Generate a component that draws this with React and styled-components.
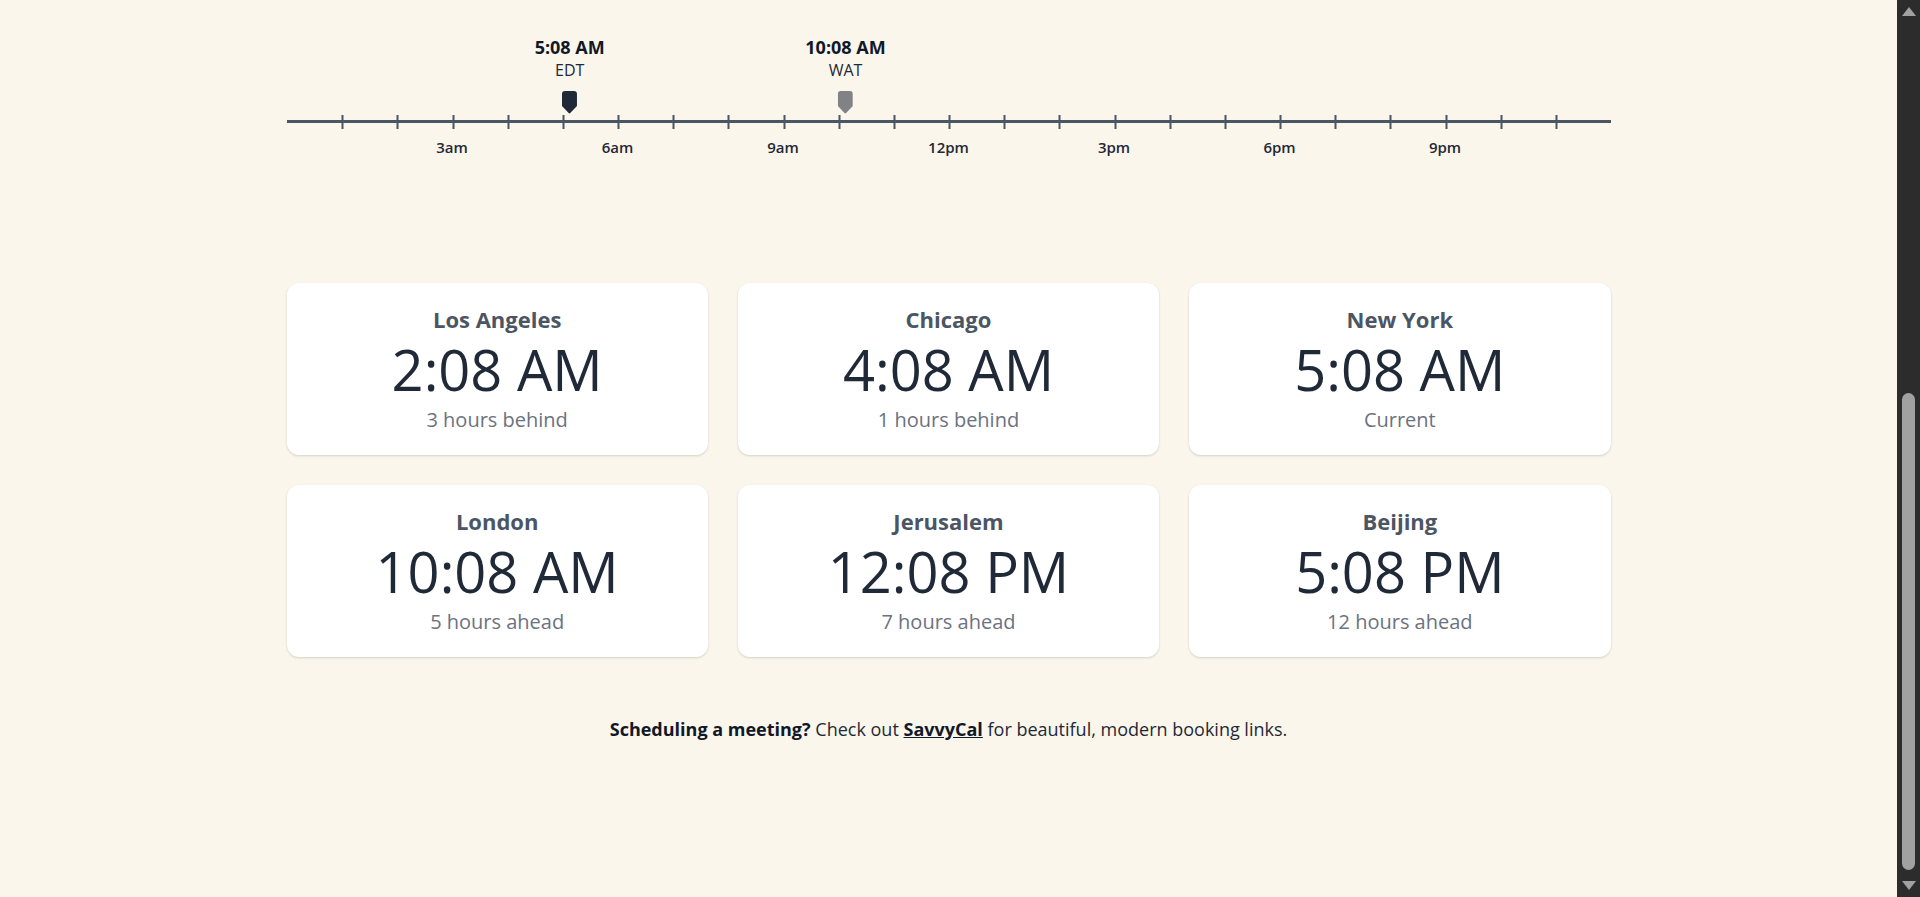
import React from 'react';
import styled, { createGlobalStyle } from 'styled-components';

const GlobalStyle = createGlobalStyle`
    html, body {
        margin: 0;
        padding: 0;
        height: 100%;
        overflow: hidden;
    }
    body {
        font-family: 'Open Sans', 'Noto Sans', Arial, sans-serif;
        background-color: #faf6ec;
        color: #1f2937;
    }
`;

const HOURS = 24;

const markers = [
    { time: '5:08 AM', zone: 'EDT', hour: 5 + 8 / 60, color: '#1f2937' },
    { time: '10:08 AM', zone: 'WAT', hour: 10 + 8 / 60, color: '#808285' },
];

const hourLabels = [
    { hour: 3, label: '3am' },
    { hour: 6, label: '6am' },
    { hour: 9, label: '9am' },
    { hour: 12, label: '12pm' },
    { hour: 15, label: '3pm' },
    { hour: 18, label: '6pm' },
    { hour: 21, label: '9pm' },
];

const cities = [
    { name: 'Los Angeles', time: '2:08 AM', diff: '3 hours behind' },
    { name: 'Chicago', time: '4:08 AM', diff: '1 hours behind' },
    { name: 'New York', time: '5:08 AM', diff: 'Current' },
    { name: 'London', time: '10:08 AM', diff: '5 hours ahead' },
    { name: 'Jerusalem', time: '12:08 PM', diff: '7 hours ahead' },
    { name: 'Beijing', time: '5:08 PM', diff: '12 hours ahead' },
];

const Page = styled.div`
    display: flex;
    height: 100vh;
    background-color: #faf6ec;
`;

const Main = styled.main`
    flex: 1;
    padding-top: 30px;
    overflow: hidden;
`;

const Container = styled.div`
    width: 1324px;
    margin: 0 auto;
`;

const Timeline = styled.div`
    position: relative;
    height: 130px;
`;

const Marker = styled.div`
    position: absolute;
    top: 6px;
    transform: translateX(-50%);
    display: flex;
    flex-direction: column;
    align-items: center;
`;

const MarkerTime = styled.div`
    font-size: 18px;
    line-height: 22px;
    font-weight: 700;
    color: #111827;
    white-space: nowrap;
`;

const MarkerZone = styled.div`
    font-size: 16px;
    line-height: 20px;
    color: #1f2937;
    margin-top: 2px;
`;

const Pin = styled.svg`
    display: block;
    margin-top: 11px;
`;

const Axis = styled.svg`
    position: absolute;
    left: 0;
    top: 84px;
    display: block;
`;

const HourLabel = styled.div`
    position: absolute;
    top: 107px;
    transform: translateX(-50%);
    font-size: 15px;
    line-height: 20px;
    font-weight: 600;
    color: #1f2937;
`;

const CardGrid = styled.div`
    display: grid;
    grid-template-columns: repeat(3, 1fr);
    gap: 30px;
    margin-top: 123px;
`;

const Card = styled.div`
    background-color: #ffffff;
    border-radius: 12px;
    padding: 21px 16px 21px;
    box-shadow: 0 1px 3px rgba(0, 0, 0, 0.1), 0 1px 2px rgba(0, 0, 0, 0.06);
    display: flex;
    flex-direction: column;
    align-items: center;
    text-align: center;
`;

const CityName = styled.div`
    font-size: 22px;
    line-height: 30px;
    font-weight: 700;
    color: #4b5563;
`;

const CityTime = styled.div`
    font-size: 56px;
    line-height: 56px;
    font-weight: 400;
    color: #1f2937;
    margin-top: 7px;
`;

const CityDiff = styled.div`
    font-size: 20px;
    line-height: 28px;
    color: #6b7280;
    margin-top: 9px;
`;

const Footer = styled.p`
    margin: 60px 0 0;
    text-align: center;
    font-size: 18px;
    line-height: 24px;
    color: #1f2937;

    strong {
        font-weight: 700;
        color: #111827;
    }

    a {
        font-weight: 700;
        color: #111827;
        text-decoration: underline;
    }
`;

const ScrollBar = styled.div`
    width: 23px;
    background-color: #2c2c2c;
    display: flex;
    flex-direction: column;
    align-items: center;
`;

const ScrollArrow = styled.div`
    height: 23px;
    display: flex;
    align-items: center;
    justify-content: center;
`;

const ScrollTrack = styled.div`
    flex: 1;
    padding-top: 370px;
`;

const ScrollThumb = styled.div`
    width: 13px;
    height: 477px;
    border-radius: 7px;
    background-color: #a1a1a1;
`;

const pct = (hour) => `${(hour / HOURS) * 100}%`;

const TimelineAxis = () => {
    const width = 1324;
    const step = width / HOURS;
    const ticks = [];
    for (let i = 1; i < HOURS; i++) {
        const x = Math.round(i * step) + 0.5;
        ticks.push(<line key={i} x1={x} x2={x} y1={1} y2={15} stroke="#4b5563" strokeWidth="2" />);
    }
    return (
        <Axis width={width} height={16} viewBox={`0 0 ${width} 16`}>
            <line x1={0} x2={width} y1={7.5} y2={7.5} stroke="#4b5563" strokeWidth="3" />
            {ticks}
        </Axis>
    );
};

const App = () => {
    return (
        <Page>
            <GlobalStyle />
            <Main>
                <Container>
                    <Timeline>
                        {markers.map((m) => (
                            <Marker key={m.zone} style={{ left: pct(m.hour) }}>
                                <MarkerTime>{m.time}</MarkerTime>
                                <MarkerZone>{m.zone}</MarkerZone>
                                <Pin width="15" height="23" viewBox="0 0 15 23">
                                    <path
                                        d="M0 3 Q0 0 3 0 H12 Q15 0 15 3 V15 L8.3 22 Q7.5 22.8 6.7 22 L0 15 Z"
                                        fill={m.color}
                                    />
                                </Pin>
                            </Marker>
                        ))}
                        <TimelineAxis />
                        {hourLabels.map((h) => (
                            <HourLabel key={h.hour} style={{ left: pct(h.hour) }}>
                                {h.label}
                            </HourLabel>
                        ))}
                    </Timeline>

                    <CardGrid>
                        {cities.map((c) => (
                            <Card key={c.name}>
                                <CityName>{c.name}</CityName>
                                <CityTime>{c.time}</CityTime>
                                <CityDiff>{c.diff}</CityDiff>
                            </Card>
                        ))}
                    </CardGrid>

                    <Footer>
                        <strong>Scheduling a meeting?</strong> Check out <a href="#savvycal">SavvyCal</a> for beautiful, modern booking links.
                    </Footer>
                </Container>
            </Main>
            <ScrollBar>
                <ScrollArrow>
                    <svg width="14" height="9" viewBox="0 0 14 9">
                        <path d="M7 0 L14 9 H0 Z" fill="#a1a1a1" />
                    </svg>
                </ScrollArrow>
                <ScrollTrack>
                    <ScrollThumb />
                </ScrollTrack>
                <ScrollArrow>
                    <svg width="14" height="9" viewBox="0 0 14 9">
                        <path d="M0 0 H14 L7 9 Z" fill="#a1a1a1" />
                    </svg>
                </ScrollArrow>
            </ScrollBar>
        </Page>
    );
};

export default App;
